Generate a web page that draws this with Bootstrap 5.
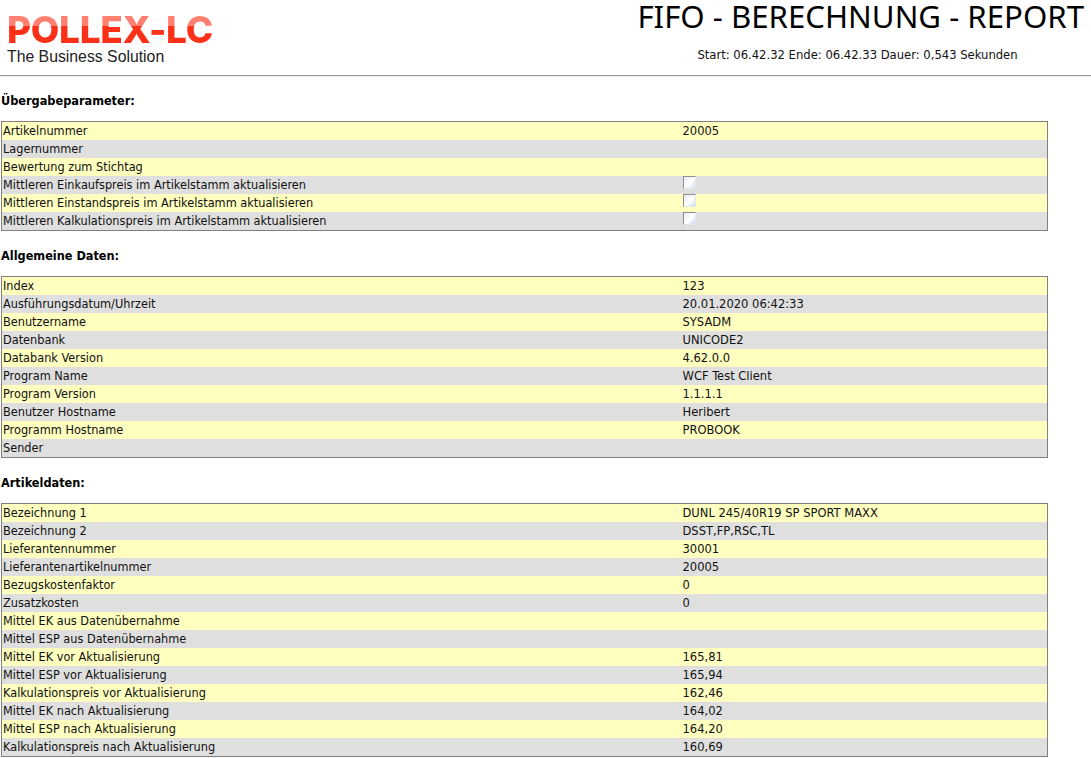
<!DOCTYPE html>
<html lang="de">
<head>
<meta charset="utf-8">
<title>FIFO - Berechnung - Report</title>
<link href="https://cdn.jsdelivr.net/npm/bootstrap@5.3.0/dist/css/bootstrap.min.css" rel="stylesheet">
<style>
body{background:#fff;color:#000;font-family:"DejaVu Sans Condensed","DejaVu Sans",sans-serif;font-size:12.6px;line-height:18px;overflow:hidden}
.rep-head{height:75px;padding:0 7px 0 7px}
.logo-box{width:260px;padding-top:15px}
.logo-word{font-family:Inter,"Liberation Sans",sans-serif;font-weight:800;font-size:37px;line-height:30px;height:30px;letter-spacing:-.3px;background:linear-gradient(#ff8071 0,#ff8071 36%,#fb3018 37%,#fb3018 100%);-webkit-background-clip:text;background-clip:text;color:transparent;width:fit-content}
.logo-sub{font-family:"Liberation Sans",sans-serif;font-size:15.8px;line-height:18px;color:#222;margin-top:3px}
.title-box{width:453px;text-align:right;margin-left:auto}
.rep-title{font-family:"Noto Sans",sans-serif;font-size:31.2px;line-height:32px;font-weight:400;margin:0;color:#000;white-space:nowrap}
.rep-sub{text-align:center;font-size:12.9px;margin-top:14px;color:#111;padding-right:0}
.rep-rule{height:2px;border:0;border-top:1px solid #999;border-bottom:1px solid #eee;margin:0;opacity:1;background:none}
.sec-title{font-size:12.6px;line-height:18px;font-weight:700;margin:0;padding:0 0 0 1px}
.rep-table{width:1047px;margin:0 0 0 1px;border:1px solid #808080;table-layout:fixed;border-collapse:collapse;--bs-table-bg:transparent}
.rep-table td{padding:0 2px;height:18px;line-height:18px;border:0;color:#111;box-shadow:none;white-space:nowrap;font-size:12.8px}
.rep-table td:first-child{padding-left:1px;width:679px;font-size:12.6px}
.rep-table tr:nth-child(odd) td{background:#ffffc0}
.rep-table tr:nth-child(even) td{background:#dfdfdf}
.cb{display:block;width:13px;height:13px;margin-left:0;border:1px solid;border-color:#8e8e8e #e6e6e6 #e6e6e6 #8e8e8e;background:linear-gradient(135deg,#e9e9f2 0,#fff 55%,#cfd9f2 100%)}
.s1{margin-top:15px;margin-bottom:11px}
.s2{margin-top:16px;margin-bottom:11px}
</style>
</head>
<body>
<header class="rep-head d-flex">
  <div class="logo-box">
    <div class="logo-word">POLLEX-LC</div>
    <div class="logo-sub">The Business Solution</div>
  </div>
  <div class="title-box">
    <h1 class="rep-title">FIFO - BERECHNUNG - REPORT</h1>
    <div class="rep-sub">Start: 06.42.32 Ende: 06.42.33 Dauer: 0,543 Sekunden</div>
  </div>
</header>
<hr class="rep-rule">

<h2 class="sec-title s1">Übergabeparameter:</h2>
<table class="table rep-table">
<tr><td>Artikelnummer</td><td>20005</td></tr>
<tr><td>Lagernummer</td><td></td></tr>
<tr><td>Bewertung zum Stichtag</td><td></td></tr>
<tr><td>Mittleren Einkaufspreis im Artikelstamm aktualisieren</td><td><span class="cb"></span></td></tr>
<tr><td>Mittleren Einstandspreis im Artikelstamm aktualisieren</td><td><span class="cb"></span></td></tr>
<tr><td>Mittleren Kalkulationspreis im Artikelstamm aktualisieren</td><td><span class="cb"></span></td></tr>
</table>

<h2 class="sec-title s2">Allgemeine Daten:</h2>
<table class="table rep-table">
<tr><td>Index</td><td>123</td></tr>
<tr><td>Ausführungsdatum/Uhrzeit</td><td>20.01.2020 06:42:33</td></tr>
<tr><td>Benutzername</td><td>SYSADM</td></tr>
<tr><td>Datenbank</td><td>UNICODE2</td></tr>
<tr><td>Databank Version</td><td>4.62.0.0</td></tr>
<tr><td>Program Name</td><td>WCF Test Client</td></tr>
<tr><td>Program Version</td><td>1.1.1.1</td></tr>
<tr><td>Benutzer Hostname</td><td>Heribert</td></tr>
<tr><td>Programm Hostname</td><td>PROBOOK</td></tr>
<tr><td>Sender</td><td></td></tr>
</table>

<h2 class="sec-title s2">Artikeldaten:</h2>
<table class="table rep-table">
<tr><td>Bezeichnung 1</td><td>DUNL 245/40R19 SP SPORT MAXX</td></tr>
<tr><td>Bezeichnung 2</td><td>DSST,FP,RSC,TL</td></tr>
<tr><td>Lieferantennummer</td><td>30001</td></tr>
<tr><td>Lieferantenartikelnummer</td><td>20005</td></tr>
<tr><td>Bezugskostenfaktor</td><td>0</td></tr>
<tr><td>Zusatzkosten</td><td>0</td></tr>
<tr><td>Mittel EK aus Datenübernahme</td><td></td></tr>
<tr><td>Mittel ESP aus Datenübernahme</td><td></td></tr>
<tr><td>Mittel EK vor Aktualisierung</td><td>165,81</td></tr>
<tr><td>Mittel ESP vor Aktualisierung</td><td>165,94</td></tr>
<tr><td>Kalkulationspreis vor Aktualisierung</td><td>162,46</td></tr>
<tr><td>Mittel EK nach Aktualisierung</td><td>164,02</td></tr>
<tr><td>Mittel ESP nach Aktualisierung</td><td>164,20</td></tr>
<tr><td>Kalkulationspreis nach Aktualisierung</td><td>160,69</td></tr>
</table>
<script src="https://cdn.jsdelivr.net/npm/bootstrap@5.3.0/dist/js/bootstrap.bundle.min.js"></script>
</body>
</html>
